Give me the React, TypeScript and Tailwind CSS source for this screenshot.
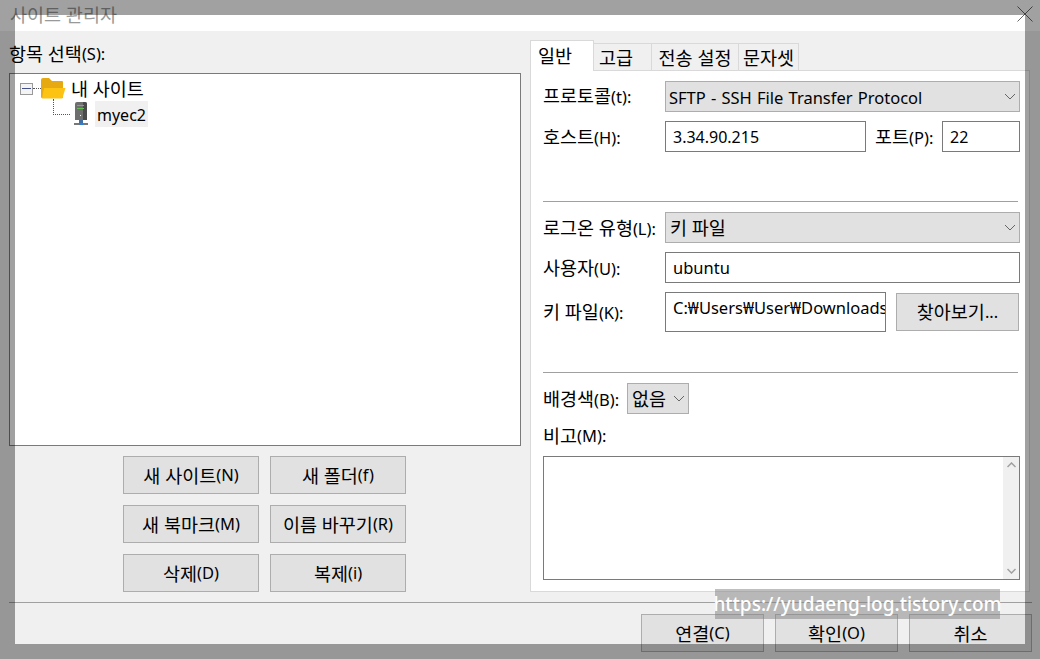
import type { ReactNode } from "react";

const font = "[font-family:'Noto_Sans','Noto_Sans_CJK_KR',sans-serif]";

/* Hangul is set larger than Latin, as the two come from differently proportioned faces */
function T({ text }: { text: string }) {
  const parts = text.split(/([\uAC00-\uD7A3]+(?: [\uAC00-\uD7A3]+)*)/).filter(Boolean);
  return (
    <>
      {parts.map((p, i) =>
        /[\uAC00-\uD7A3]/.test(p) ? (
          <span key={i} className="text-[18.5px]">{p}</span>
        ) : (
          <span key={i} className="text-[16.5px]">{p}</span>
        ),
      )}
    </>
  );
}

function Btn({ label, cls }: { label: string; cls: string }) {
  return (
    <div className={`flex items-center justify-center whitespace-nowrap border border-[#adadad] bg-[#e1e1e1] text-black ${cls}`}>
      <T text={label} />
    </div>
  );
}

function Chevron() {
  return (
    <svg width="12" height="7" viewBox="0 0 12 7" className="shrink-0">
      <path d="M1 1 L6 6 L11 1" fill="none" stroke="#666" strokeWidth="1" />
    </svg>
  );
}

function Select({ children, cls }: { children: ReactNode; cls: string }) {
  return (
    <div className={`flex items-center justify-between whitespace-nowrap border border-[#adadad] bg-[#e1e1e1] ${cls}`}>
      <span>{children}</span>
      <Chevron />
    </div>
  );
}

function Input({ children, cls }: { children: ReactNode; cls: string }) {
  return (
    <div className={`overflow-hidden whitespace-nowrap border border-[#7a7a7a] bg-white pl-[7px] ${cls}`}>
      {children}
    </div>
  );
}

function Label({ text, cls }: { text: string; cls: string }) {
  return (
    <span className={`shrink-0 whitespace-nowrap ${cls}`}>
      <T text={text} />
    </span>
  );
}

function FolderIcon() {
  return (
    <svg width="25" height="21" viewBox="0 0 25 21" className="shrink-0">
      <path d="M0 2 Q0 0 2 0 H8 L11 3 H21 Q22 3 22 4 V7 H0 Z" fill="#e7a911" />
      <path d="M0 6 H22 V20 H1 Q0 20 0 19 Z" fill="#e7a911" />
      <path d="M3 10 H24.5 L21.5 20 Q21.3 20.6 20.5 20.6 H1 Z" fill="#fdc313" />
    </svg>
  );
}

function ServerIcon() {
  return (
    <svg width="16" height="24" viewBox="0 0 16 24" className="shrink-0">
      <path d="M2 2 Q2 0 4 0 H12 Q14 0 14 2 V18 H2 Z" fill="#6e6e6e" />
      <path d="M10 0 H12 Q14 0 14 2 V18 H10 Z" fill="#4a4a4a" />
      <rect x="4" y="3" width="7" height="1" fill="#5fc24a" />
      <rect x="4" y="6" width="7" height="1" fill="#5fc24a" />
      <rect x="7" y="13" width="1" height="1" fill="#fff" />
      <rect x="6" y="18" width="4" height="3" fill="#3f6fa5" />
      <rect x="1" y="21" width="14" height="2" fill="#777" />
      <rect x="6" y="21" width="4" height="2" fill="#2d7dd2" />
    </svg>
  );
}

export default function App() {
  return (
    <div className={`relative flex h-[659px] w-[1040px] flex-col overflow-hidden bg-[#f0f0f0] text-[16.5px] text-black ${font}`}>
      {/* title bar */}
      <div className="flex h-[31px] shrink-0 items-center justify-between bg-white pl-[10px] pr-[7px] text-[#999999]">
        <span className="-mt-[2px] text-[18.5px]">사이트 관리자</span>
        <svg width="16" height="16" viewBox="0 0 16 16" className="-mt-[4px]">
          <path d="M0.5 0.5 L15.5 15.5 M15.5 0.5 L0.5 15.5" stroke="#666" strokeWidth="1" />
        </svg>
      </div>

      {/* body */}
      <div className="flex h-[561px] shrink-0 pl-[9px] pr-[10px]">
        {/* left column */}
        <div className="flex w-[512px] shrink-0 flex-col">
          <div className="flex h-[42px] shrink-0 items-end whitespace-nowrap pb-[9px] leading-[20px]">
            <T text="항목 선택(S):" />
          </div>
          <div className="h-[373px] shrink-0 border border-[#7a7a7a] bg-white pl-[10px] pt-[4px]">
            <div className="flex h-[21px] items-center">
              <div className="flex h-[12px] w-[13px] items-center justify-center border border-[#999] bg-[#f4f4f4]">
                <div className="h-px w-[9px] bg-[#44508a]" />
              </div>
              <div className="w-[8px] border-t border-dotted border-[#555]" />
              <FolderIcon />
              <span className="ml-[5px] text-[18.5px]">내 사이트</span>
            </div>
            <div className="flex h-[30px] items-start">
              <div className="ml-[33px] h-[16px] w-[17px] border-b border-l border-dotted border-[#555]" />
              <div className="ml-[3px] mt-[3px]"><ServerIcon /></div>
              <span className="ml-[6px] mt-[2px] h-[26px] bg-[#f0f0f0] px-[2px] pt-px text-[16px] leading-[26px]">myec2</span>
            </div>
          </div>
          <div className="ml-[114px] mt-[10px] grid w-[283px] grid-cols-[136px_136px] gap-x-[11px] gap-y-[11px]">
            <Btn label="새 사이트(N)" cls="h-[38px] pt-px" />
            <Btn label="새 폴더(f)" cls="h-[38px] pt-px" />
            <Btn label="새 북마크(M)" cls="h-[38px] pt-px" />
            <Btn label="이름 바꾸기(R)" cls="h-[38px] pt-px" />
            <Btn label="삭제(D)" cls="h-[38px] pt-px" />
            <Btn label="복제(i)" cls="h-[38px] pt-px" />
          </div>
        </div>

        {/* right column */}
        <div className="ml-[9px] flex w-[500px] shrink-0 flex-col pt-[9px]">
          <div className="relative z-10 flex h-[31px] items-end text-[18.5px]">
            <div className="flex h-[31px] w-[64px] items-center justify-center border border-b-0 border-[#d9d9d9] bg-white pr-[14px]">일반</div>
            <div className="flex h-[28px] w-[58px] items-center justify-center border-b border-r border-t border-[#d9d9d9] bg-[#f0f0f0] pr-[13px] pt-px">고급</div>
            <div className="flex h-[28px] w-[87px] items-center justify-center whitespace-nowrap border-b border-r border-t border-[#d9d9d9] bg-[#f0f0f0] pt-px">전송 설정</div>
            <div className="flex h-[28px] w-[60px] items-center justify-center border-b border-r border-t border-[#d9d9d9] bg-[#f0f0f0] pt-px">문자셋</div>
          </div>
          <div className="-mt-px flex h-[522px] flex-col border border-[#d9d9d9] bg-white pl-[12px] pr-[9px] pt-[10px]">
            <div className="flex h-[31px] items-center">
              <Label text="프로토콜(t):" cls="-mt-px w-[122px]" />
              <Select cls="h-[31px] w-[355px] pl-[3px] pr-[3px]">
                <span className="relative top-[2px] [word-spacing:0.9px]">SFTP - SSH File Transfer Protocol</span>
              </Select>
            </div>
            <div className="mt-[9px] flex h-[31px] items-center">
              <Label text="호스트(H):" cls="w-[122px]" />
              <Input cls="h-[31px] w-[201px] pt-px text-[16px] leading-[29px]">3.34.90.215</Input>
              <Label text="포트(P):" cls="ml-[9px] w-[67px]" />
              <Input cls="h-[31px] w-[78px] pt-px text-[16px] leading-[29px]">22</Input>
            </div>
            <div className="mr-[2px] mt-[49px] h-px bg-[#a0a0a0]" />
            <div className="mt-[10px] flex h-[31px] items-center">
              <Label text="로그온 유형(L):" cls="w-[122px]" />
              <Select cls="h-[31px] w-[355px] pl-[4px] pr-[3px]"><T text="키 파일" /></Select>
            </div>
            <div className="mt-[9px] flex h-[31px] items-center">
              <Label text="사용자(U):" cls="w-[122px]" />
              <Input cls="h-[31px] w-[355px] leading-[29px]">ubuntu</Input>
            </div>
            <div className="mt-[9px] flex h-[40px] items-center">
              <Label text="키 파일(K):" cls="w-[122px]" />
              <Input cls="h-[40px] w-[221px] pr-[1px] leading-[29px]">C:₩Users₩User₩Downloads</Input>
              <Btn label="찾아보기..." cls="ml-[10px] h-[38px] w-[123px]" />
            </div>
            <div className="mr-[2px] mt-[40px] h-px bg-[#a0a0a0]" />
            <div className="mt-[10px] flex h-[31px] items-center">
              <Label text="배경색(B):" cls="w-[84px]" />
              <Select cls="h-[31px] w-[62px] pl-[4px] pr-[3px]"><T text="없음" /></Select>
            </div>
            <div className="flex h-[42px] items-center whitespace-nowrap pt-[2px]"><T text="비고(M):" /></div>
            <div className="flex h-[124px] w-[477px] justify-end border border-[#7a7a7a] bg-white">
              <div className="flex w-[16px] flex-col items-center justify-between bg-[#f0f0f0] py-[5px]">
                <svg width="9" height="6" viewBox="0 0 9 6"><path d="M0.5 5 L4.5 1 L8.5 5" fill="none" stroke="#a0a0a0" strokeWidth="1.5" /></svg>
                <svg width="9" height="6" viewBox="0 0 9 6"><path d="M0.5 1 L4.5 5 L8.5 1" fill="none" stroke="#a0a0a0" strokeWidth="1.5" /></svg>
              </div>
            </div>
          </div>
        </div>
      </div>

      {/* footer */}
      <div className="ml-[9px] mr-[8px] mt-[10px] h-px shrink-0 bg-[#a0a0a0]" />
      <div className="mr-[8px] mt-[11px] flex shrink-0 justify-end gap-x-[11px]">
        <Btn label="연결(C)" cls="h-[38px] w-[123px] pt-px" />
        <Btn label="확인(O)" cls="h-[38px] w-[123px] pt-px" />
        <Btn label="취소" cls="h-[38px] w-[123px] pt-px" />
      </div>

      {/* dimming frame around the highlighted capture area */}
      <div className="pointer-events-none absolute left-[15px] top-[15px] h-[629px] w-[1010px] shadow-[0_0_0_40px_rgba(0,0,0,0.37)]" />

      {/* watermark */}
      <div className="absolute left-[715px] top-[589px] flex h-[30px] w-[285px] items-center justify-center whitespace-nowrap bg-[rgba(128,128,128,0.5)] text-[19px] font-medium text-white">
        https://yudaeng-log.tistory.com
      </div>
    </div>
  );
}
